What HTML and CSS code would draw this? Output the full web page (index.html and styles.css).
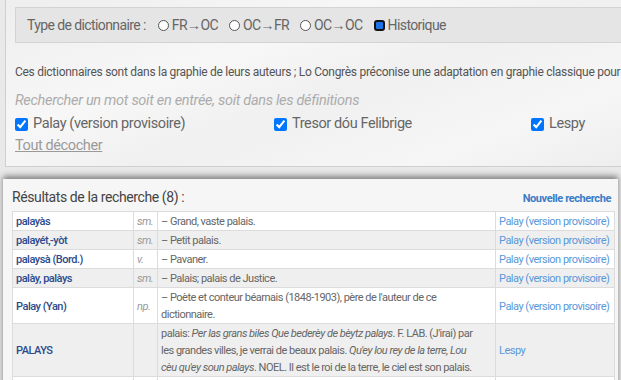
FILE: index.html
```html
<!DOCTYPE html>
<html>
<head>
    <title>Dictionnaire - recherche</title>
    <link rel="stylesheet" href="styles.css">
</head>
<body>
    <div class="search-panel">
        <div class="type-box">
            <span class="type-label">Type de dictionnaire :</span>
            <label class="type-option"><span class="radio"></span>FR→OC</label>
            <label class="type-option"><span class="radio"></span>OC→FR</label>
            <label class="type-option"><span class="radio"></span>OC→OC</label>
            <label class="type-option"><span class="radio selected"></span>Historique</label>
        </div>

        <div class="notice">Ces dictionnaires sont dans la graphie de leurs auteurs ; Lo Congrès préconise une adaptation en graphie classique pour leur utilisation.</div>

        <div class="search-hint">Rechercher un mot soit en entrée, soit dans les définitions</div>

        <div class="dico-list">
            <label class="dico"><input type="checkbox" checked> Palay (version provisoire)</label>
            <label class="dico"><input type="checkbox" checked> Tresor dóu Felibrige</label>
            <label class="dico"><input type="checkbox" checked> Lespy</label>
        </div>

        <a class="uncheck" href="#">Tout décocher</a>
    </div>

    <div class="results">
        <div class="results-head">
            <h2>Résultats de la recherche (8) :</h2>
            <a class="new-search" href="#">Nouvelle recherche</a>
        </div>

        <table class="results-table">
            <colgroup>
                <col class="col-entry">
                <col class="col-gram">
                <col class="col-def">
                <col class="col-source">
            </colgroup>
            <tr>
                <td class="entry"><a href="#">palayàs</a></td>
                <td class="gram">sm.</td>
                <td class="def">– Grand, vaste palais.</td>
                <td class="source"><a href="#">Palay (version provisoire)</a></td>
            </tr>
            <tr>
                <td class="entry"><a href="#">palayét,-yòt</a></td>
                <td class="gram">sm.</td>
                <td class="def">– Petit palais.</td>
                <td class="source"><a href="#">Palay (version provisoire)</a></td>
            </tr>
            <tr>
                <td class="entry"><a href="#">palaysà (Bord.)</a></td>
                <td class="gram">v.</td>
                <td class="def">– Pavaner.</td>
                <td class="source"><a href="#">Palay (version provisoire)</a></td>
            </tr>
            <tr>
                <td class="entry"><a href="#">palày, palàys</a></td>
                <td class="gram">sm.</td>
                <td class="def">– Palais; palais de Justice.</td>
                <td class="source"><a href="#">Palay (version provisoire)</a></td>
            </tr>
            <tr>
                <td class="entry"><a href="#">Palay (Yan)</a></td>
                <td class="gram">np.</td>
                <td class="def">– Poète et conteur béarnais (1848-1903), père de l'auteur de ce<br>dictionnaire.</td>
                <td class="source"><a href="#">Palay (version provisoire)</a></td>
            </tr>
            <tr>
                <td class="entry"><a href="#">PALAYS</a></td>
                <td class="gram"></td>
                <td class="def">palais: <i>Per las grans biles Que bederèy de bèytz palays</i>. F. LAB. (J'irai) par<br>les grandes villes, je verrai de beaux palais. <i>Qu'ey lou rey de la terre, Lou</i><br><i>cèu qu'ey soun palays</i>. NOEL. Il est le roi de la terre, le ciel est son palais.</td>
                <td class="source"><a href="#">Lespy</a></td>
            </tr>
            <tr>
                <td class="entry"><a href="#">palays</a></td>
                <td class="gram">sm.</td>
                <td class="def">– Palais.</td>
                <td class="source"><a href="#">Tresor dóu Felibrige</a></td>
            </tr>
        </table>
    </div>
</body>
</html>
```

FILE: styles.css
```css
html, body {
    overflow: hidden;
}

body {
    margin: 0;
    font-family: Roboto, "Liberation Sans", sans-serif;
    background: #e9e9e9;
    color: #666;
}

/* Search options panel */
.search-panel {
    margin-left: 5px;
    padding: 7px 0 10px 9px;
    border-left: 1px solid #cfcfcf;
    border-bottom: 1px solid #cfcfcf;
    background: linear-gradient(160deg, #eeeeee 0%, #f7f7f7 35%, #f0f0f0 55%, #f6f6f6 80%, #eeeeee 100%);
}

.type-box {
    height: 34px;
    display: flex;
    align-items: center;
    padding-left: 11px;
    border: 1px solid #d3d3d3;
    border-right: none;
    background: #e5e5e5;
    font-size: 14px;
    letter-spacing: -0.6px;
    white-space: nowrap;
}

.type-label {
    margin-right: 12px;
}

.type-option {
    display: flex;
    align-items: center;
    margin-right: 11px;
}

.radio {
    width: 9px;
    height: 9px;
    border: 1px solid #555;
    border-radius: 50%;
    background: #fff;
    margin-right: 3px;
}

.radio.selected {
    width: 7px;
    height: 7px;
    border: 2px solid #111;
    border-radius: 3px;
    background: #1a73e8;
}

.notice {
    margin-top: 21px;
    font-size: 12px;
    line-height: 16px;
    letter-spacing: -0.28px;
    color: #555;
    white-space: nowrap;
    overflow: hidden;
}

.search-hint {
    margin-top: 12px;
    font-size: 14.5px;
    line-height: 18px;
    font-style: italic;
    letter-spacing: -0.3px;
    color: #acacac;
}

.dico-list {
    margin-top: 4px;
    display: grid;
    grid-template-columns: 259px 257px 100px;
    font-size: 14.5px;
    line-height: 20px;
    letter-spacing: -0.4px;
}

.dico {
    display: flex;
    align-items: center;
    gap: 5px;
}

.dico input {
    margin: 0;
    width: 13px;
    height: 13px;
}

.uncheck {
    display: inline-block;
    margin-top: 2px;
    font-size: 14.5px;
    line-height: 20px;
    letter-spacing: -0.4px;
    color: #9a9a9a;
}

/* Results */
.results {
    margin: 12px 3px 0 3px;
    padding: 8px 4px 0 9px;
    background: #f6f6f6;
    box-shadow: 0 -3px 6px rgba(0, 0, 0, 0.45);
}

.results-head {
    display: flex;
    align-items: flex-end;
    justify-content: space-between;
    padding-right: 3px;
    margin-bottom: 4px;
}

.results-head h2 {
    margin: 0;
    font-size: 14px;
    font-weight: normal;
    line-height: 20px;
    letter-spacing: -0.4px;
    color: #444;
}

.new-search {
    font-size: 11px;
    font-weight: bold;
    line-height: 16px;
    letter-spacing: -0.4px;
    color: #3a7cc6;
    text-decoration: none;
}

.results-table {
    width: 602px;
    table-layout: fixed;
    border-collapse: collapse;
    font-size: 11px;
    letter-spacing: -0.5px;
    line-height: 17px;
}

.col-entry { width: 121px; }
.col-gram { width: 24px; }
.col-def { width: 338px; }
.col-source { width: 119px; }

.results-table td {
    border: 1px solid #dcdcdc;
    padding: 1px 3px 0 3px;
    vertical-align: middle;
    overflow: hidden;
}

.results-table tr:nth-child(odd) td {
    background: #fff;
}

.results-table tr:nth-child(even) td {
    background: #efefef;
}

.results-table a {
    text-decoration: none;
}

.entry a {
    color: #2b4a8c;
    font-weight: 500;
}

.gram {
    font-style: italic;
    color: #999;
}

.def {
    color: #666;
}

.source {
    white-space: nowrap;
}

.source a {
    color: #5a98d9;
}
```
